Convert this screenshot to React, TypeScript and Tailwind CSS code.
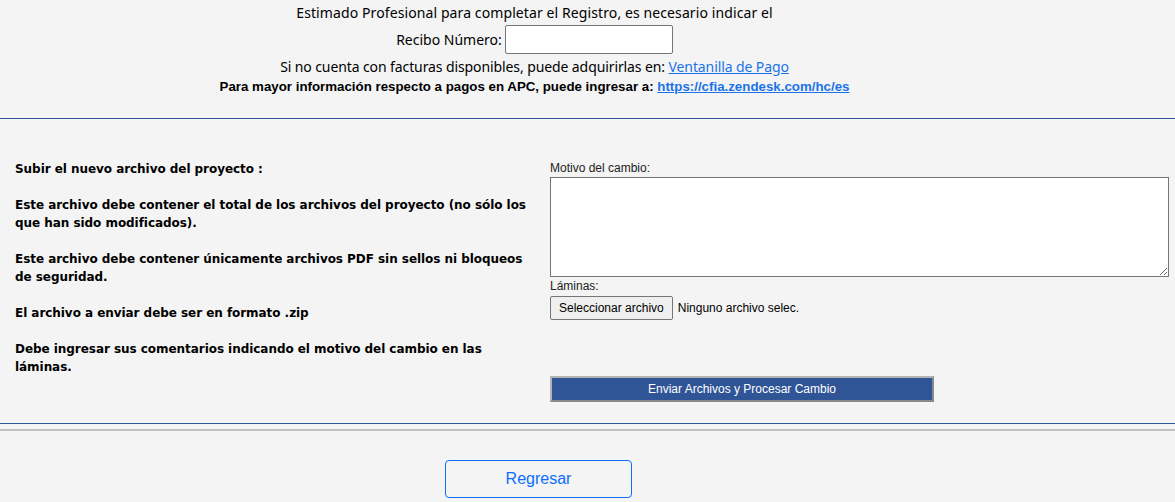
export default function App() {
  const notes = [
    'Subir el nuevo archivo del proyecto :',
    'Este archivo debe contener el total de los archivos del proyecto (no sólo los que han sido modificados).',
    'Este archivo debe contener únicamente archivos PDF sin sellos ni bloqueos de seguridad.',
    'El archivo a enviar debe ser en formato .zip',
    'Debe ingresar sus comentarios indicando el motivo del cambio en las láminas.',
  ]

  return (
    <div className="min-h-[502px] w-full bg-[#f4f4f4] text-black">
      {/* registro */}
      <div className="flex flex-col items-center pt-[3px] pr-[106px] font-['Noto_Sans',sans-serif] text-[14px]">
        <p className="h-[20px] leading-[20px] tracking-[0.1px]">Estimado Profesional para completar el Registro, es necesario indicar el</p>
        <div className="mt-[2px] flex h-[29px] items-center gap-[3px]">
          <span>Recibo Número:</span>
          <input type="text" className="h-[29px] w-[168px] rounded-[2px] border border-[#767676] bg-white" />
        </div>
        <p className="mt-[3px] h-[20px] leading-[20px] tracking-[-0.1px]">
          Si no cuenta con facturas disponibles, puede adquirirlas en:{' '}
          <a href="#" className="text-[#1a73e8] underline">Ventanilla de Pago</a>
        </p>
        <p className="mt-[1px] h-[18px] font-['Liberation_Sans',Arial,sans-serif] text-[13.3px] font-bold leading-[18px]">
          Para mayor información respecto a pagos en APC, puede ingresar a:{' '}
          <a href="#" className="text-[#1a73e8] underline">https://cfia.zendesk.com/hc/es</a>
        </p>
      </div>

      <div className="mt-[22px] h-px bg-[#2f5597]" />

      {/* carga */}
      <div className="flex pt-[39px]">
        <div className="w-[550px] shrink-0 pl-[15px] pr-[18px] pt-[2px] font-['DejaVu_Sans',sans-serif] text-[12px] font-bold leading-[18px] tracking-[-0.05px]">
          {notes.map((n, i) => (
            <p key={i} className={i > 0 ? 'mt-[18px]' : ''}>{n}</p>
          ))}
        </div>
        <div className="flex w-[619px] flex-col font-['Liberation_Sans',Arial,sans-serif] text-[12px] text-[#222]">
          <label className="mt-[2px] h-[16px] leading-[16px]">Motivo del cambio:</label>
          <textarea className="mt-[1px] h-[100px] w-full resize border border-[#767676] bg-white" />
          <label className="mt-[2px] h-[14px] leading-[14px]">Láminas:</label>
          <div className="mt-[3px] flex items-center gap-[5px]">
            <button className="h-[24px] rounded-[2px] border border-[#767676] bg-[#efefef] px-[8px] text-[12px] text-black">
              Seleccionar archivo
            </button>
            <span className="text-black">Ninguno archivo selec.</span>
          </div>
          <button className="mt-[56px] h-[26px] w-[384px] border-2 border-t-[#b4b4b4] border-l-[#b4b4b4] border-r-[#8a8a8a] border-b-[#8a8a8a] bg-[#2f5597] text-[12px] text-white">
            Enviar Archivos y Procesar Cambio
          </button>
        </div>
      </div>

      <div className="mt-[21px] h-px bg-[#2f5597]" />
      <div className="mt-[5px] h-[2px] bg-[#c0c0c0]" />

      <div className="flex justify-center pt-[29px] pr-[98px]">
        <button className="h-[38px] w-[187px] rounded-[4px] border border-[#0d6efd] font-['Liberation_Sans',Arial,sans-serif] text-[16px] text-[#0d6efd]">
          Regresar
        </button>
      </div>
    </div>
  )
}
